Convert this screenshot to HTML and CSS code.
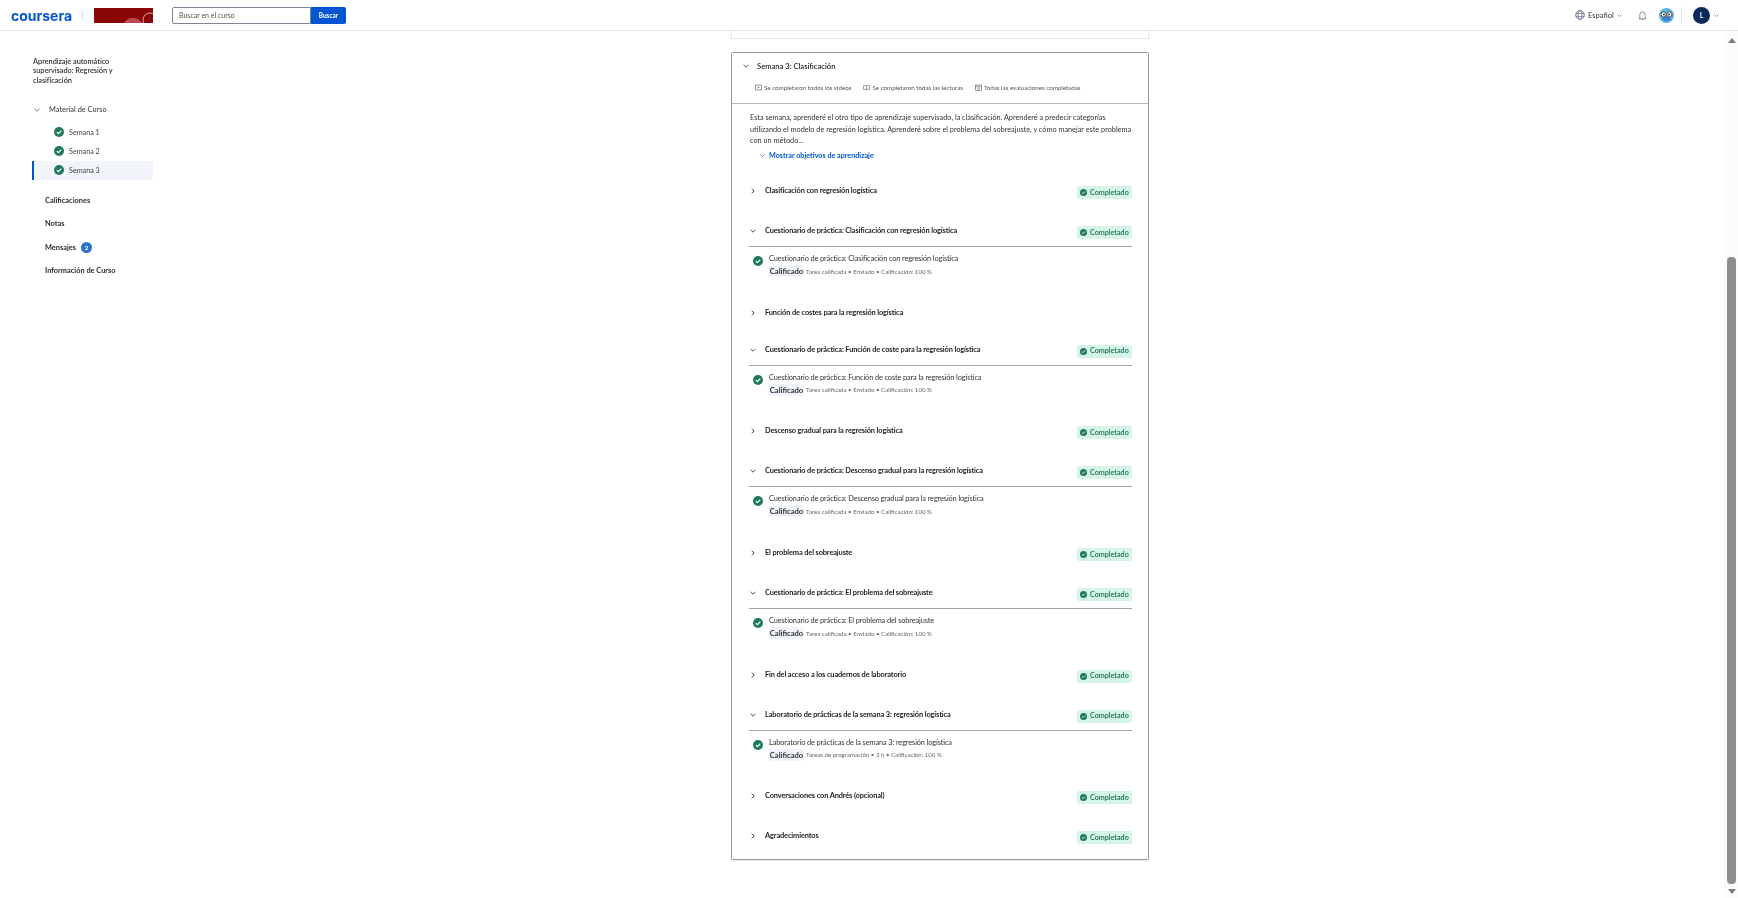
FILE: index.html
```html
<!DOCTYPE html>
<html lang="es">
<head>
    <meta charset="UTF-8">
    <title>Semana 3: Clasificación</title>
    <link rel="stylesheet" href="styles.css">
</head>
<body>
    <svg class="defs" width="0" height="0">
        <symbol id="check" viewBox="0 0 10 10">
            <circle cx="5" cy="5" r="5" fill="#1f7a5c"/>
            <path d="M2.8 5.1 4.4 6.6 7.3 3.6" fill="none" stroke="#fff" stroke-width="1.2"/>
        </symbol>
        <symbol id="down" viewBox="0 0 10 10">
            <path d="M2 3.5 5 6.5 8 3.5" fill="none" stroke="currentColor" stroke-width="1"/>
        </symbol>
        <symbol id="right" viewBox="0 0 10 10">
            <path d="M3.5 2 6.5 5 3.5 8" fill="none" stroke="currentColor" stroke-width="1.1"/>
        </symbol>
    </svg>

    <header class="topbar">
        <span class="logo">coursera</span>
        <span class="logo-sep"></span>
        <svg class="partner" viewBox="0 0 59 15">
            <rect width="59" height="15" fill="#8a0606"/>
            <circle cx="39" cy="21" r="11" fill="#b94a4f"/>
            <circle cx="56" cy="12" r="7" fill="none" stroke="#e3a9a9" stroke-width="1"/>
        </svg>
        <div class="search">
            <span class="search-input">Buscar en el curso</span>
            <span class="search-btn">Buscar</span>
        </div>
        <div class="topbar-right">
            <svg class="globe" viewBox="0 0 10 10">
                <circle cx="5" cy="5" r="4.3" fill="none" stroke="#5b6780" stroke-width=".8"/>
                <ellipse cx="5" cy="5" rx="2" ry="4.3" fill="none" stroke="#5b6780" stroke-width=".7"/>
                <path d="M.8 3.6h8.4M.8 6.4h8.4" stroke="#5b6780" stroke-width=".7"/>
            </svg>
            <span class="lang">Español</span>
            <svg class="mini-chev"><use href="#down"/></svg>
            <svg class="bell" viewBox="0 0 10 12">
                <path d="M2 9V5a3 3 0 0 1 6 0v4l1 .6H1zM4 10.6h2" fill="none" stroke="#5b6780" stroke-width=".8"/>
            </svg>
            <svg class="owl" viewBox="0 0 14 14">
                <circle cx="7" cy="7" r="7" fill="#58b4dc"/>
                <path d="M3 11a4 3 0 0 1 8 0 7 7 0 0 1-8 0z" fill="#3f7fd0"/>
                <circle cx="4.3" cy="6" r="2.4" fill="#fff" stroke="#333" stroke-width=".8"/>
                <circle cx="9.7" cy="6" r="2.4" fill="#fff" stroke="#333" stroke-width=".8"/>
                <circle cx="4.6" cy="6" r=".9" fill="#333"/>
                <circle cx="9.4" cy="6" r=".9" fill="#333"/>
            </svg>
            <span class="right-sep"></span>
            <span class="avatar">L</span>
            <svg class="mini-chev"><use href="#down"/></svg>
        </div>
    </header>

    <div class="layout">
        <nav class="sidebar">
            <div class="course-title">Aprendizaje automático supervisado: Regresión y clasificación</div>
            <div class="material"><svg class="chev"><use href="#down"/></svg>Material de Curso</div>
            <div class="week"><svg class="week-check"><use href="#check"/></svg>Semana 1</div>
            <div class="week"><svg class="week-check"><use href="#check"/></svg>Semana 2</div>
            <div class="week week-active"><svg class="week-check"><use href="#check"/></svg>Semana 3</div>
            <div class="side-link first">Calificaciones</div>
            <div class="side-link">Notas</div>
            <div class="side-link">Mensajes <span class="count">2</span></div>
            <div class="side-link">Información de Curso</div>
        </nav>

        <main class="content">
            <div class="prev-card"></div>
            <section class="card">
                <div class="card-head">
                    <div class="week-title"><svg class="chev"><use href="#down"/></svg>Semana 3: Clasificación</div>
                    <div class="summary">
                        <span class="sum-item">
                            <svg class="sum-icon" viewBox="0 0 10 10"><rect x="1" y="1.5" width="8" height="7" fill="none" stroke="#555" stroke-width=".9"/><path d="M4 3.4 6.6 5 4 6.6z" fill="#555"/></svg>
                            Se completaron todos los videos
                        </span>
                        <span class="sum-item">
                            <svg class="sum-icon" viewBox="0 0 10 10"><path d="M5 2.6C4 1.8 2 1.8.8 2.2v5.6C2 7.4 4 7.4 5 8.2c1-.8 3-.8 4.2-.4V2.2C8 1.8 6 1.8 5 2.6zM5 2.6v5.6" fill="none" stroke="#555" stroke-width=".8"/></svg>
                            Se completaron todas las lecturas
                        </span>
                        <span class="sum-item">
                            <svg class="sum-icon" viewBox="0 0 10 10"><rect x="1" y="1.5" width="8" height="7.5" fill="none" stroke="#555" stroke-width=".9"/><path d="M1 3.7h8M3 5.5h4M3 7.2h4" stroke="#555" stroke-width=".7"/></svg>
                            Todas las evaluaciones completadas
                        </span>
                    </div>
                </div>

                <p class="desc">Esta semana, aprenderé el otro tipo de aprendizaje supervisado, la clasificación. Aprenderé a predecir categorías utilizando el modelo de regresión logística. Aprenderé sobre el problema del sobreajuste, y cómo manejar este problema con un método...</p>
                <div class="objectives"><svg class="obj-chev"><use href="#down"/></svg>Mostrar objetivos de aprendizaje</div>

                <div class="row">
                    <svg class="chev"><use href="#right"/></svg>
                    <span class="row-title">Clasificación con regresión logística</span>
                    <span class="done"><svg class="done-check"><use href="#check"/></svg>Completado</span>
                </div>

                <div class="row row-open">
                    <svg class="chev"><use href="#down"/></svg>
                    <span class="row-title">Cuestionario de práctica: Clasificación con regresión logística</span>
                    <span class="done"><svg class="done-check"><use href="#check"/></svg>Completado</span>
                </div>
                <div class="item">
                    <svg class="item-check"><use href="#check"/></svg>
                    <div>
                        <div class="item-title">Cuestionario de práctica: Clasificación con regresión logística</div>
                        <div class="item-meta"><span class="chip">Calificado</span>Tarea calificada • Enviado • Calificación: 100 %</div>
                    </div>
                </div>

                <div class="row row-plain">
                    <svg class="chev"><use href="#right"/></svg>
                    <span class="row-title">Función de costes para la regresión logística</span>
                </div>

                <div class="row row-open">
                    <svg class="chev"><use href="#down"/></svg>
                    <span class="row-title">Cuestionario de práctica: Función de coste para la regresión logística</span>
                    <span class="done"><svg class="done-check"><use href="#check"/></svg>Completado</span>
                </div>
                <div class="item">
                    <svg class="item-check"><use href="#check"/></svg>
                    <div>
                        <div class="item-title">Cuestionario de práctica: Función de coste para la regresión logística</div>
                        <div class="item-meta"><span class="chip">Calificado</span>Tarea calificada • Enviado • Calificación: 100 %</div>
                    </div>
                </div>

                <div class="row">
                    <svg class="chev"><use href="#right"/></svg>
                    <span class="row-title">Descenso gradual para la regresión logística</span>
                    <span class="done"><svg class="done-check"><use href="#check"/></svg>Completado</span>
                </div>

                <div class="row row-open">
                    <svg class="chev"><use href="#down"/></svg>
                    <span class="row-title">Cuestionario de práctica: Descenso gradual para la regresión logística</span>
                    <span class="done"><svg class="done-check"><use href="#check"/></svg>Completado</span>
                </div>
                <div class="item">
                    <svg class="item-check"><use href="#check"/></svg>
                    <div>
                        <div class="item-title">Cuestionario de práctica: Descenso gradual para la regresión logística</div>
                        <div class="item-meta"><span class="chip">Calificado</span>Tarea calificada • Enviado • Calificación: 100 %</div>
                    </div>
                </div>

                <div class="row">
                    <svg class="chev"><use href="#right"/></svg>
                    <span class="row-title">El problema del sobreajuste</span>
                    <span class="done"><svg class="done-check"><use href="#check"/></svg>Completado</span>
                </div>

                <div class="row row-open">
                    <svg class="chev"><use href="#down"/></svg>
                    <span class="row-title">Cuestionario de práctica: El problema del sobreajuste</span>
                    <span class="done"><svg class="done-check"><use href="#check"/></svg>Completado</span>
                </div>
                <div class="item">
                    <svg class="item-check"><use href="#check"/></svg>
                    <div>
                        <div class="item-title">Cuestionario de práctica: El problema del sobreajuste</div>
                        <div class="item-meta"><span class="chip">Calificado</span>Tarea calificada • Enviado • Calificación: 100 %</div>
                    </div>
                </div>

                <div class="row">
                    <svg class="chev"><use href="#right"/></svg>
                    <span class="row-title">Fin del acceso a los cuadernos de laboratorio</span>
                    <span class="done"><svg class="done-check"><use href="#check"/></svg>Completado</span>
                </div>

                <div class="row row-open">
                    <svg class="chev"><use href="#down"/></svg>
                    <span class="row-title">Laboratorio de prácticas de la semana 3: regresión logística</span>
                    <span class="done"><svg class="done-check"><use href="#check"/></svg>Completado</span>
                </div>
                <div class="item">
                    <svg class="item-check"><use href="#check"/></svg>
                    <div>
                        <div class="item-title">Laboratorio de prácticas de la semana 3: regresión logística</div>
                        <div class="item-meta"><span class="chip">Calificado</span>Tareas de programación • 3 h • Calificación: 100 %</div>
                    </div>
                </div>

                <div class="row">
                    <svg class="chev"><use href="#right"/></svg>
                    <span class="row-title">Conversaciones con Andrés (opcional)</span>
                    <span class="done"><svg class="done-check"><use href="#check"/></svg>Completado</span>
                </div>

                <div class="row row-last">
                    <svg class="chev"><use href="#right"/></svg>
                    <span class="row-title">Agradecimientos</span>
                    <span class="done"><svg class="done-check"><use href="#check"/></svg>Completado</span>
                </div>
            </section>
        </main>

        <div class="scrollbar">
            <span class="arrow-up"></span>
            <div class="track"><div class="thumb"></div></div>
            <span class="arrow-down"></span>
        </div>
    </div>
</body>
</html>
```

FILE: styles.css
```css
* { box-sizing: border-box; }
html, body { height: 100%; }
body {
    margin: 0;
    overflow: hidden;
    background: #fff;
    color: #1f1f1f;
    font-family: "Lato", "Open Sans", sans-serif;
    font-size: 8px;
    display: flex;
    flex-direction: column;
}
.defs { position: absolute; }

/* the capture is soft, keep the same softness */
.topbar, .sidebar, .content { filter: blur(.3px); }

/* top bar */
.topbar {
    height: 31px;
    flex: none;
    display: flex;
    align-items: center;
    padding-left: 11px;
    border-bottom: 1px solid #e3e5e8;
}
.logo {
    width: 60px;
    color: #0056d2;
    font-family: "Inter", sans-serif;
    font-size: 14px;
    font-weight: 700;
}
.logo-sep { width: 1px; height: 10px; margin: 0 11px; background: #dfe1e5; }
.partner { width: 59px; height: 15px; }
.search { display: flex; height: 17px; margin-left: 19px; }
.search-input {
    width: 139px;
    padding-left: 6px;
    border: 1px solid #7c8594;
    border-radius: 2px 0 0 2px;
    color: #555;
    font-size: 7px;
    line-height: 15px;
}
.search-btn {
    width: 35px;
    background: #0056d2;
    border-radius: 0 2px 2px 0;
    color: #fff;
    font-size: 6.5px;
    font-weight: 700;
    line-height: 17px;
    text-align: center;
}
.topbar-right { margin-left: auto; display: flex; align-items: center; padding-right: 18px; }
.globe { width: 10px; height: 10px; margin-right: 3px; }
.lang { width: 25px; font-size: 7.5px; color: #333; }
.mini-chev { width: 7px; height: 7px; margin-left: 3px; color: #777; }
.bell { width: 9px; height: 11px; margin-left: 15px; }
.owl { width: 15px; height: 15px; margin-left: 12px; }
.right-sep { width: 1px; height: 16px; margin: 0 11px 0 7px; background: #e3e5e8; }
.avatar {
    width: 17px;
    height: 17px;
    border-radius: 50%;
    background: #0b2a5c;
    color: #fff;
    font-size: 6.5px;
    font-weight: 700;
    line-height: 17px;
    text-align: center;
}

/* body */
.layout { flex: 1; display: flex; min-height: 0; }
.sidebar { width: 731px; flex: none; padding: 26px 0 0 33px; }
.course-title { width: 88px; font-size: 7.4px; letter-spacing: -.05px; line-height: 9.3px; color: #333; font-weight: 600; }
.chev { width: 8px; height: 8px; flex: none; color: #222; }
.material {
    display: flex;
    align-items: center;
    margin: 19px 0 7px;
    height: 12px;
    font-size: 7.4px;
    color: #333;
}
.material .chev { margin-right: 8px; color: #555; }
.week {
    display: flex;
    align-items: center;
    width: 121px;
    height: 19px;
    margin-left: -1px;
    padding-left: 22px;
    font-size: 7.2px;
    color: #444;
}
.week-check { width: 10px; height: 10px; margin-right: 5px; }
.week-active {
    background: #f1f5fa;
    border-left: 2px solid #0056d2;
    border-radius: 0 2px 2px 0;
    padding-left: 20px;
}
.side-link {
    display: flex;
    align-items: center;
    height: 23.3px;
    margin-left: 12px;
    font-size: 7.4px;
    font-weight: 700;
    color: #2b2b2b;
    gap: 5px;
}
.side-link.first { margin-top: 9px; }
.count {
    width: 11px;
    height: 11px;
    border-radius: 50%;
    background: #2a73cc;
    color: #fff;
    font-size: 6px;
    line-height: 11px;
    text-align: center;
}

.content { width: 418px; flex: none; }
.prev-card {
    height: 8px;
    border: 1px solid #e3e5e8;
    border-top: 0;
}
.card {
    margin-top: 13px;
    height: 808px;
    border: 1px solid #8f99a8;
    border-radius: 2px;
    box-shadow: 0 1px 1px rgba(0, 0, 0, .1);
}
.card-head {
    height: 51px;
    border-bottom: 1px solid #b6bcc6;
    padding: 7px 0 0 10px;
}
.week-title { display: flex; align-items: center; gap: 7px; height: 12px; font-size: 7.6px; font-weight: 600; }
.summary { display: flex; gap: 12px; margin: 12px 0 0 13px; }
.sum-item { display: flex; align-items: center; gap: 2px; font-size: 6.2px; color: #555; white-space: nowrap; }
.sum-icon { width: 7px; height: 7px; }
.desc {
    margin: 8px 14px 0 18px;
    font-size: 7.3px;
    line-height: 11.6px;
    color: #333;
}
.objectives {
    display: flex;
    align-items: center;
    gap: 3px;
    margin: 3px 0 23.5px 27px;
    color: #0056d2;
    font-size: 7.2px;
    font-weight: 700;
    height: 12px;
}
.obj-chev { width: 7px; height: 7px; }

.row { display: flex; height: 40px; margin: 0 16px 0 17px; line-height: 12px; }
.row .chev { margin: 2px 0 0 0; }
.row-title { margin-left: 8px; font-size: 7.4px; letter-spacing: -.12px; font-weight: 700; color: #222; }
.row-plain { height: 37px; }
.row-open { height: 22px; border-bottom: 1px solid #9ba3af; }
.row-last { height: 30px; }
.done {
    display: flex;
    align-items: center;
    gap: 3px;
    margin: 1px 0 0 auto;
    width: 55px;
    height: 13px;
    padding-left: 3px;
    background: #d5f6e6;
    border-radius: 2px;
    color: #1c6b50;
    font-size: 7.2px;
    font-weight: 600;
}
.done-check { width: 7px; height: 7px; }
.item { display: flex; height: 59.6px; padding: 6px 0 0 21px; }
.item-check { width: 10px; height: 10px; margin: 3px 6px 0 0; flex: none; }
.item-title { font-size: 7.4px; letter-spacing: -.12px; line-height: 12px; color: #333; }
.item-meta { display: flex; align-items: center; height: 12px; font-size: 6.1px; color: #666; white-space: nowrap; }
.chip {
    width: 35px;
    height: 12px;
    margin-right: 2px;
    background: #f0f4fa;
    border-radius: 2px;
    color: #333;
    font-size: 7.6px;
    font-weight: 700;
    line-height: 12px;
    text-align: center;
}

/* fake browser scrollbar */
.scrollbar {
    margin-left: auto;
    width: 14px;
    padding: 7px 1px 4px 2px;
    display: flex;
    flex-direction: column;
    align-items: center;
    background: #fbfbfb;
}
.arrow-up, .arrow-down { width: 0; height: 0; border-left: 4px solid transparent; border-right: 4px solid transparent; }
.arrow-up { border-bottom: 5px solid #7d7d7d; }
.arrow-down { border-top: 5px solid #7d7d7d; }
.track { flex: 1; width: 9px; padding-top: 214px; padding-bottom: 5px; display: flex; }
.thumb { width: 9px; flex: 1; background: #8e8e8e; border-radius: 4px; }
```
